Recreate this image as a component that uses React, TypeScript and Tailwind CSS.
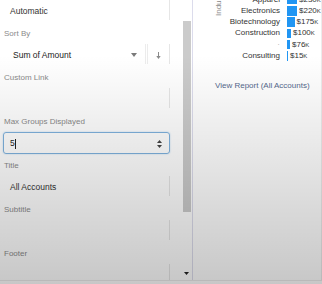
import React from 'react';

const rows = [
  { label: 'Apparel', value: '$230', w: 10 },
  { label: 'Electronics', value: '$220', w: 10 },
  { label: 'Biotechnology', value: '$175', w: 7.5 },
  { label: 'Construction', value: '$100', w: 4 },
  { label: '·', value: '$76', w: 3 },
  { label: 'Consulting', value: '$15', w: 1 },
];

function Label({ children }: { children: React.ReactNode }) {
  return <div className="shrink-0 h-[10px] leading-[10px] pl-[4px] text-[8px] text-[#8a8a8a]">{children}</div>;
}

function Field({ children }: { children?: React.ReactNode }) {
  return (
    <div className="shrink-0 ml-[3px] w-[167px] h-[20px] mt-[5px] mb-[9px] pt-[2px] border-r border-[#e6e6e6] flex items-center pl-[7px] text-[8.5px] text-[#333]">
      {children}
    </div>
  );
}

export default function App() {
  return (
    <div className="relative w-[322px] h-[284px] overflow-hidden bg-white font-['Liberation_Sans',Arial,sans-serif] flex flex-col">
      <div className="flex h-[280px] shrink-0 overflow-hidden">
        {/* left settings panel */}
        <div className="w-[192px] flex shrink-0">
          <div className="w-[181px] flex flex-col overflow-hidden">
            <div className="shrink-0 ml-[3px] w-[167px] h-[20px] pt-[3px] border-r border-[#e6e6e6] flex items-center pl-[7px] text-[8.5px] text-[#333]">
              Automatic
            </div>
            <div className="shrink-0 mt-[9px] flex flex-col">
              <Label>Sort By</Label>
              <div className="shrink-0 ml-[3px] w-[167px] h-[20px] mt-[5px] mb-[9px] border-r border-[#e6e6e6] flex items-center text-[8.5px] text-[#222]">
                <span className="pl-[10px] pt-[2px] flex-1">Sum of Amount</span>
                <svg width="6" height="4" viewBox="0 0 6 4" className="mr-[8px] mt-[2px]">
                  <path d="M0 0H6L3 4Z" fill="#7a7a7a" />
                </svg>
                <div className="h-full w-[1px] bg-[#ececec]" />
                <div className="h-full w-[1px] ml-[1px] bg-[#ececec]" />
                <div className="w-[21px] h-full pt-[2px] flex items-center justify-center">
                  <svg width="5" height="7" viewBox="0 0 5 7">
                    <path d="M2.5 0V6" stroke="#8a8a8a" strokeWidth="1" />
                    <path d="M0.3 4H4.7L2.5 7Z" fill="#8a8a8a" />
                  </svg>
                </div>
              </div>
              <Label>Custom Link</Label>
              <Field />
              <Label>Max Groups Displayed</Label>
              <div className="shrink-0 ml-[3px] w-[167px] h-[22px] mt-[5px] mb-[7px] border border-[#7fb2de] rounded-[3px] shadow-[0_0_2px_#b9d7f0] flex items-center pl-[6px] pt-[1px] text-[8.5px] text-[#222]">
                <span>5</span>
                <span className="w-[1px] h-[10px] bg-[#222] ml-[0.5px]" />
                <div className="ml-auto mr-[7px] flex flex-col gap-[2px]">
                  <svg width="5" height="3" viewBox="0 0 5 3"><path d="M0 3H5L2.5 0Z" fill="#444" /></svg>
                  <svg width="5" height="3" viewBox="0 0 5 3"><path d="M0 0H5L2.5 3Z" fill="#444" /></svg>
                </div>
              </div>
              <Label>Title</Label>
              <Field>All Accounts</Field>
              <Label>Subtitle</Label>
              <Field />
              <Label>Footer</Label>
              <Field />
            </div>
          </div>
          {/* scrollbar */}
          <div className="w-[11px] flex flex-col items-center">
            <div className="shrink-0 mt-[21px] h-[191px] w-[8px] bg-[#cbcbcb]" />
            <svg width="5" height="3" viewBox="0 0 5 3" className="shrink-0 mt-[60px]">
              <path d="M0 0H5L2.5 3Z" fill="#222" />
            </svg>
          </div>
        </div>

        {/* right chart panel */}
        <div className="flex-1 border-l border-[#dcdcec] border-r border-r-[#ececec] flex flex-col">
          <div className="flex mt-[-6px] shrink-0">
            <div className="w-[30px] relative">
              <div className="absolute left-[22px] top-[22px] origin-top-left -rotate-90 text-[8px] leading-[7px] text-[#8a8a8a] whitespace-nowrap">
                Industry
              </div>
            </div>
            <div className="flex flex-col">
              {rows.map((r) => (
                <div key={r.label} className="h-[11.25px] flex items-center">
                  <div className="w-[57px] text-right text-[8px] leading-[10px] text-[#333]">
                    {r.label === '·' ? <span className="text-[#aaa]">·</span> : r.label}
                  </div>
                  <div className="ml-[7px] h-[9.5px] bg-[#2196f3]" style={{ width: `${r.w}px` }} />
                  <div className="ml-[2px] text-[8px] leading-[10px] text-[#333] whitespace-nowrap">
                    {r.value}
                    <span className="text-[6px]">K</span>
                  </div>
                </div>
              ))}
            </div>
          </div>
          <div className="mt-[19px] pl-[22px] text-[8px] leading-[10px] text-[#54698d] whitespace-nowrap">
            View Report (All Accounts)
          </div>
        </div>
      </div>
      <div className="h-[4px] border-t border-[#ececec]" />
      <div className="pointer-events-none absolute inset-0 bg-[linear-gradient(to_bottom,rgba(0,0,0,0)_55px,rgba(0,0,0,0.22)_100%)]" />
    </div>
  );
}
